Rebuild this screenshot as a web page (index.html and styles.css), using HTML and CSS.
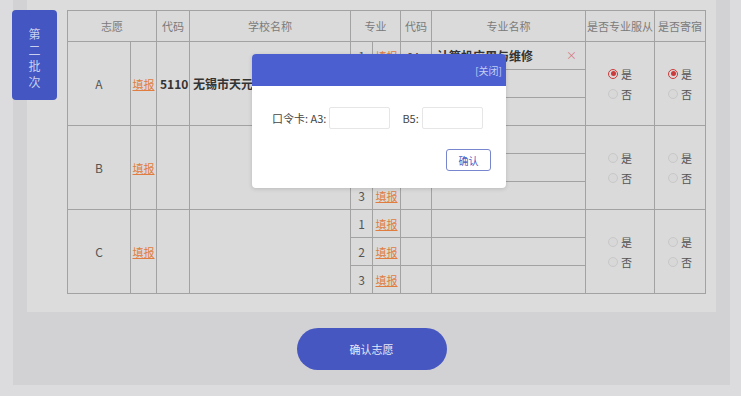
FILE: index.html
```html
<!DOCTYPE html>
<html lang="zh">
<head>
<meta charset="utf-8">
<title>志愿填报</title>
<link rel="stylesheet" href="styles.css">
</head>
<body>
<div class="shell">
  <div class="tab"><span>第</span><span>二</span><span>批</span><span>次</span></div>
  <div class="content">
    <table class="grid">
      <colgroup>
        <col style="width:63px"><col style="width:26px"><col style="width:33px"><col style="width:161px">
        <col style="width:22px"><col style="width:28px"><col style="width:31px"><col style="width:154px">
        <col style="width:69px"><col style="width:51px">
      </colgroup>
      <thead>
        <tr class="head">
          <th colspan="2">志愿</th><th>代码</th><th>学校名称</th><th colspan="2">专业</th><th>代码</th><th>专业名称</th><th>是否专业服从</th><th>是否寄宿</th>
        </tr>
      </thead>
      <tbody>
        <tr class="sub">
          <td rowspan="3" class="c letter">A</td>
          <td rowspan="3" class="c"><a class="fill">填报</a></td>
          <td rowspan="3" class="l b">5110</td>
          <td rowspan="3" class="l b">无锡市天元技工学校</td>
          <td class="c num">1</td><td class="c"><a class="fill">填报</a></td><td class="l code">04</td>
          <td class="l b major"><span>计算机应用与维修</span><span class="del">×</span></td>
          <td rowspan="3" class="c"><div class="radios"><label class="radio"><i class="dot on"></i>是</label><label class="radio"><i class="dot"></i>否</label></div></td>
          <td rowspan="3" class="c"><div class="radios"><label class="radio"><i class="dot on"></i>是</label><label class="radio"><i class="dot"></i>否</label></div></td>
        </tr>
        <tr class="sub"><td class="c num">2</td><td class="c"><a class="fill">填报</a></td><td></td><td></td></tr>
        <tr class="sub"><td class="c num">3</td><td class="c"><a class="fill">填报</a></td><td></td><td></td></tr>

        <tr class="sub">
          <td rowspan="3" class="c letter">B</td>
          <td rowspan="3" class="c"><a class="fill">填报</a></td>
          <td rowspan="3"></td>
          <td rowspan="3"></td>
          <td class="c num">1</td><td class="c"><a class="fill">填报</a></td><td></td><td></td>
          <td rowspan="3" class="c"><div class="radios"><label class="radio"><i class="dot"></i>是</label><label class="radio"><i class="dot"></i>否</label></div></td>
          <td rowspan="3" class="c"><div class="radios"><label class="radio"><i class="dot"></i>是</label><label class="radio"><i class="dot"></i>否</label></div></td>
        </tr>
        <tr class="sub"><td class="c num">2</td><td class="c"><a class="fill">填报</a></td><td></td><td></td></tr>
        <tr class="sub"><td class="c num">3</td><td class="c"><a class="fill">填报</a></td><td></td><td></td></tr>

        <tr class="sub">
          <td rowspan="3" class="c letter">C</td>
          <td rowspan="3" class="c"><a class="fill">填报</a></td>
          <td rowspan="3"></td>
          <td rowspan="3"></td>
          <td class="c num">1</td><td class="c"><a class="fill">填报</a></td><td></td><td></td>
          <td rowspan="3" class="c"><div class="radios"><label class="radio"><i class="dot"></i>是</label><label class="radio"><i class="dot"></i>否</label></div></td>
          <td rowspan="3" class="c"><div class="radios"><label class="radio"><i class="dot"></i>是</label><label class="radio"><i class="dot"></i>否</label></div></td>
        </tr>
        <tr class="sub"><td class="c num">2</td><td class="c"><a class="fill">填报</a></td><td></td><td></td></tr>
        <tr class="sub"><td class="c num">3</td><td class="c"><a class="fill">填报</a></td><td></td><td></td></tr>
      </tbody>
    </table>
  </div>
  <div class="actions">
    <button class="submit">确认志愿</button>
  </div>
</div>

<div class="modal">
  <div class="modal-head"><span class="close">[关闭]</span></div>
  <div class="modal-body">
    <div class="fields">
      <span class="lbl">口令卡: A3:</span><span class="input"></span>
      <span class="lbl b5">B5:</span><span class="input"></span>
    </div>
    <div class="modal-foot"><button class="ok">确认</button></div>
  </div>
</div>
</body>
</html>
```

FILE: styles.css
```css
* { box-sizing: border-box; }
html, body { margin: 0; padding: 0; }
body {
  width: 741px;
  height: 396px;
  overflow: hidden;
  background: #dcdbdd;
  font-family: "Noto Sans CJK SC", "Noto Sans", sans-serif;
  color: #444;
  position: relative;
}
.shell {
  margin-left: 13px;
  width: 717px;
  height: 385px;
  background: #d2d1d3;
  position: relative;
}
.tab {
  position: absolute;
  left: -1px;
  top: 10px;
  width: 45px;
  height: 90px;
  background: #4356c2;
  border-radius: 4px;
  display: flex;
  flex-direction: column;
  align-items: center;
  padding-top: 16px;
  color: #c9d0ee;
  font-size: 12px;
  line-height: 16px;
}
.content {
  margin-left: 14px;
  width: 689px;
  height: 312px;
  background: #dcdcdc;
  padding: 10px 0 0 40px;
}
.grid {
  border-collapse: collapse;
  table-layout: fixed;
  width: 638px;
  background: #dadada;
  font-size: 11px;
}
.grid th, .grid td {
  border: 1px solid #a2a2a2;
  padding: 0;
  vertical-align: middle;
  white-space: nowrap;
  overflow: hidden;
}
.grid th {
  height: 31px;
  font-weight: normal;
  color: #7a7a7a;
  font-size: 11px;
}
.grid tr.sub td { height: 28px; }
.grid td.c { text-align: center; }
.grid td.l { text-align: left; padding-left: 3px; }
.grid td.code { padding-left: 6px; }
.grid td.b { font-weight: bold; color: #333; font-size: 12px; }
.grid td.major { padding-left: 5px; padding-right: 8px; }
.major .del {
  float: right;
  color: #d77a86;
  font-weight: normal;
  font-size: 11px;
}
.letter { color: #555; font-size: 12px; }
.num { color: #555; font-size: 12px; }
.fill {
  color: #e07d3e;
  text-decoration: underline;
  font-size: 11px;
}
.radios {
  display: flex;
  flex-direction: column;
  align-items: center;
  gap: 4px;
}
.radio {
  display: flex;
  align-items: center;
  gap: 3px;
  font-size: 11px;
  color: #555;
  line-height: 16px;
}
.dot {
  width: 10px;
  height: 10px;
  border-radius: 50%;
  border: 1px solid #c8c8c8;
  background: #d8d8d8;
  display: inline-flex;
  align-items: center;
  justify-content: center;
}
.dot.on { border-color: #cc3b3b; background: #dadada; }
.dot.on::after {
  content: "";
  width: 5px;
  height: 5px;
  border-radius: 50%;
  background: #cc3b3b;
}
.actions {
  display: flex;
  justify-content: center;
  padding-top: 16px;
}
.submit {
  width: 150px;
  height: 42px;
  border: none;
  border-radius: 21px;
  background: #4657c1;
  color: #e6e8f6;
  font-family: inherit;
  font-size: 11px;
}
.modal {
  position: absolute;
  left: 252px;
  top: 54px;
  width: 254px;
  height: 134px;
  background: #fff;
  border-radius: 4px;
  overflow: hidden;
  box-shadow: 0 1px 4px rgba(0,0,0,0.15);
}
.modal-head {
  height: 32px;
  background: #4c5fd0;
  display: flex;
  justify-content: flex-end;
  align-items: center;
  padding: 0 4px 0 0;
}
.close { color: #c6cdf4; font-size: 10px; }
.modal-body { padding: 21px 15px 0 20px; }
.fields {
  display: flex;
  align-items: center;
  height: 22px;
  font-size: 11px;
  color: #444;
}
.lbl { margin-right: 3px; }
.b5 { margin-left: 12px; }
.input {
  width: 61px;
  height: 22px;
  border: 1px solid #e6e6e6;
  border-radius: 2px;
  background: #fff;
}
.modal-foot {
  display: flex;
  justify-content: flex-end;
  margin-top: 20px;
}
.ok {
  width: 45px;
  height: 22px;
  border: 1px solid #7885cf;
  border-radius: 3px;
  background: #fff;
  color: #4a5ac4;
  font-family: inherit;
  font-size: 10px;
  padding: 0;
}
```
